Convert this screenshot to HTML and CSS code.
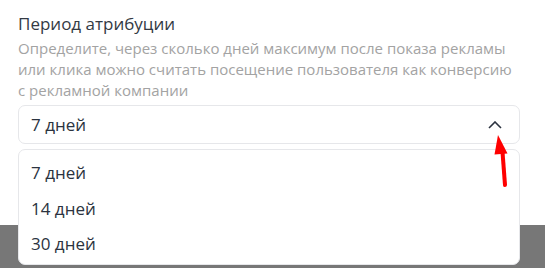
FILE: index.html
```html
<!DOCTYPE html>
<html lang="ru">
<head>
<meta charset="UTF-8" />
<title>Период атрибуции</title>
<link rel="stylesheet" href="styles.css">
</head>
<body>
<main class="panel">
  <section class="field">
    <h2 class="field-title">Период атрибуции</h2>
    <p class="field-hint">Определите, через сколько дней максимум после показа рекламы или клика можно считать посещение пользователя как конверсию с рекламной компании</p>
    <div class="select">
      <div class="select-value">
        <span>7 дней</span>
        <svg class="chevron" width="14" height="8" viewBox="0 0 14 8"><path d="M1 7 L7 1 L13 7" fill="none" stroke="#2b3340" stroke-width="1.6"/></svg>
      </div>
      <ul class="select-menu">
        <li>7 дней</li>
        <li>14 дней</li>
        <li>30 дней</li>
      </ul>
    </div>
  </section>
  <svg class="pointer" width="16" height="54" viewBox="0 0 16 54"><path d="M9.5 18 L12 51" stroke="#ff0000" stroke-width="4" stroke-linecap="round"/><path d="M5 1 L14.5 19.5 L1.5 20.5 Z" fill="#ff0000"/></svg>
  <div class="backdrop"></div>
</main>
</body>
</html>
```

FILE: styles.css
```css
body {
  margin: 0;
  background: #fff;
  font-family: 'Open Sans', 'Noto Sans', sans-serif;
}
.panel {
  position: relative;
  height: 268px;
  overflow: hidden;
}
.field {
  padding: 12px 25px 0 18px;
}
.field-title {
  margin: 0;
  font-size: 17px;
  font-weight: 400;
  line-height: 24px;
  color: #333a44;
}
.field-hint {
  margin: 2px 0 0;
  font-size: 15px;
  line-height: 21px;
  color: #a3a3a3;
}
.select {
  position: relative;
  margin-top: 4px;
  z-index: 2;
}
.select-value {
  display: flex;
  align-items: center;
  justify-content: space-between;
  height: 37px;
  padding: 0 17px 0 12px;
  border: 1px solid #e6e7ea;
  border-radius: 7px;
  font-size: 17px;
  color: #2b3340;
}
.select-menu {
  list-style: none;
  margin: 5px 0 0;
  padding: 5px 0 2px;
  background: #fff;
  border: 1px solid #e6e7ea;
  border-radius: 7px;
}
.select-menu li {
  padding: 0 12px;
  font-size: 17px;
  line-height: 35.5px;
  color: #2b3340;
}
.pointer {
  position: absolute;
  left: 493px;
  top: 134px;
  z-index: 3;
}
.backdrop {
  position: absolute;
  left: 0;
  right: 0;
  top: 225px;
  bottom: 0;
  background: #777;
  z-index: 1;
}
```
